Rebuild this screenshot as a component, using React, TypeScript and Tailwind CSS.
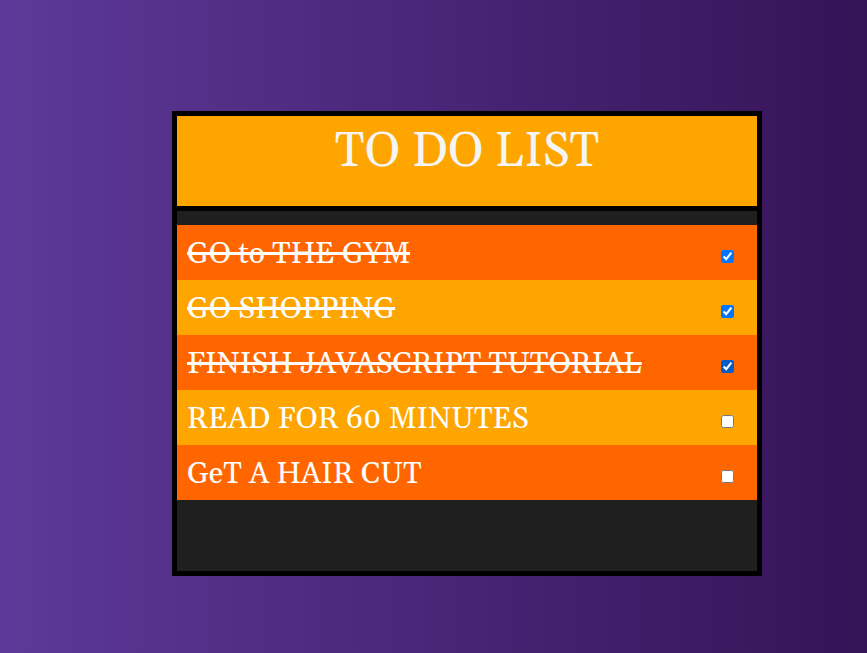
import { useState } from "react";

const initial = [
  { id: "gym", text: "GO to THE GYM", done: true, accent: "" },
  { id: "shopping", text: "GO SHOPPING", done: true, accent: "" },
  { id: "tutorial", text: "FINISH JAVASCRIPT TUTORIAL", done: true, accent: "accent-[#005cc8]" },
  { id: "read", text: "READ FOR 60 MINUTES", done: false, accent: "" },
  { id: "hair", text: "GeT A HAIR CUT", done: false, accent: "" },
];

export default function App() {
  const [items, setItems] = useState(initial);
  const toggle = (id: string) =>
    setItems(items.map((i) => (i.id === id ? { ...i, done: !i.done } : i)));

  return (
    <div className="flex min-h-screen justify-center bg-linear-to-r from-[#5d3999] to-[#361357] pt-[111px] pb-[77px] pl-[67px] font-[Georgia,Gelasio,'Liberation_Serif',serif] text-white">
      <main className="w-full max-w-[590px] self-start border-5 border-black bg-[#1f1f1f] pb-[71px]">
        <header className="mb-[14px] h-[95px] border-b-5 border-black bg-[#ffa500] pt-2 text-center text-[#f5f5f5]">
          <h1 className="text-[48px] leading-[56px]">TO DO LIST</h1>
        </header>
        <ul>
          {items.map((item) => (
            <li
              key={item.id}
              className="flex h-[55px] items-center justify-between bg-[#ffa500] pr-[23px] pl-[10px] odd:bg-[#ff6600]"
            >
              <label
                htmlFor={item.id}
                className={`pt-1 text-[30px] leading-[51px] whitespace-nowrap decoration-3 ${item.done ? "line-through" : ""}`}
              >
                {item.text}
              </label>
              <input
                id={item.id}
                type="checkbox"
                checked={item.done}
                onChange={() => toggle(item.id)}
                className={`mt-2 size-[13px] ${item.accent}`}
              />
            </li>
          ))}
        </ul>
      </main>
    </div>
  );
}
